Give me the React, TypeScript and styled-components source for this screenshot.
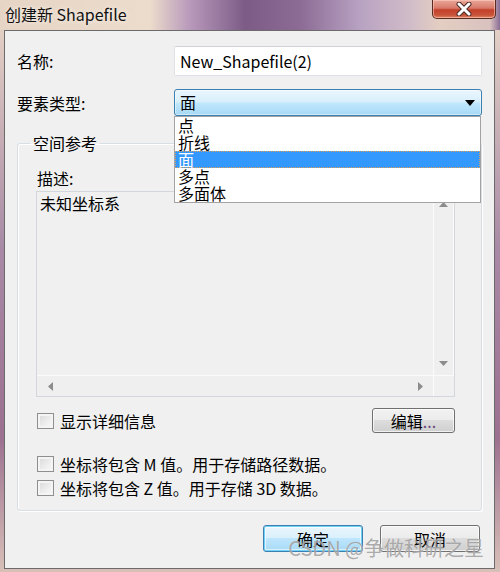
import React from "react";
import styled, { createGlobalStyle } from "styled-components";

const FONT = `"Noto Sans CJK SC", "Noto Sans", sans-serif`;

const Global = createGlobalStyle`
  html, body { margin: 0; padding: 0; width: 500px; height: 572px; overflow: hidden; }
  body { font-family: "Noto Sans CJK SC", sans-serif; background-color: #c8aeb8; }
`;

const Frame = styled.div`
  width: 500px;
  height: 572px;
  box-sizing: border-box;
  display: flex;
  flex-direction: column;
  background-color: #b89aae;
`;

const TitleBar = styled.div`
  height: 30px;
  flex-shrink: 0;
  display: flex;
  align-items: flex-start;
  padding: 0 4px;
  background-color: #b898b4;
  background-image: linear-gradient(90deg, #e6d4c4 0%, #ecdccb 30%, #b899bb 38%, #7c5c86 49%, #8c6b95 60%, #b8a2c2 72%, #d0bcc8 82%, #e4cec2 88%, #d9c2bf 98%, #8a6c94 100%);
`;

const FrameBody = styled.div`
  flex: 1;
  display: flex;
  padding: 0 5px 3px 4px;
  background-color: #c4aab8;
  background-image: linear-gradient(180deg, #e2cfc4 0%, #a98aa6 40%, #9c7090 75%, #d8c0b8 100%);
`;

const Title = styled.div`
  font: 16px/28px ${FONT};
  color: #111;
  padding-left: 1px;
  text-shadow: 0 0 5px rgba(255, 255, 255, 0.9);
`;

const CloseButton = styled.div`
  margin-left: auto;
  width: 64px;
  height: 19px;
  box-sizing: border-box;
  border: 1px solid #5b2b22;
  border-top: none;
  border-radius: 0 0 5px 5px;
  background: linear-gradient(180deg, #e9a898 0%, #d9796a 45%, #c2402a 55%, #c9553a 85%, #e08a6a 100%);
  box-shadow: inset 0 0 0 1px rgba(255, 210, 200, 0.55);
  display: flex;
  align-items: center;
  justify-content: center;
`;

const Client = styled.div`
  flex: 1;
  position: relative;
  box-sizing: border-box;
  background: #f0f0f0;
  border: 1px solid #6b6b6b;
  padding: 15px 12px 0 12px;
  display: flex;
  flex-direction: column;
  font: 16px/20px ${FONT};
  color: #000;
`;

const FormGrid = styled.div`
  display: grid;
  grid-template-columns: 157px 1fr;
  row-gap: 13px;
  align-items: center;
`;

const FieldLabel = styled.div`
  font: 16px/20px ${FONT};
`;

const TextInput = styled.div`
  height: 30px;
  box-sizing: border-box;
  background: #fff;
  border: 1px solid #dde1e6;
  border-top-color: #cfd3d8;
  border-radius: 2px;
  padding-left: 5px;
  font: 16px/28px ${FONT};
  color: #000;
`;

const SelectWrap = styled.div`
  position: relative;
  height: 27px;
`;

const SelectBox = styled.div`
  height: 27px;
  box-sizing: border-box;
  border: 1px solid #3c7fb1;
  border-radius: 3px;
  background: linear-gradient(180deg, #eaf6fd 0%, #d9f0fc 45%, #bee6fd 55%, #a7d9f5 100%);
  box-shadow: inset 0 0 0 1px rgba(255, 255, 255, 0.45);
  display: flex;
  align-items: center;
  justify-content: space-between;
  padding: 0 6px 0 5px;
  font: 16px/25px ${FONT};
`;

const DropList = styled.div`
  position: absolute;
  top: 100%;
  left: 0;
  right: 1px;
  z-index: 10;
  background: #fff;
  border: 1px solid #a3a3a3;
  display: flex;
  flex-direction: column;
`;

const DropItem = styled.div<{ $selected?: boolean }>`
  height: 17px;
  box-sizing: border-box;
  font: 16px/15px ${FONT};
  padding-left: 2px;
  border: 1px ${(p) => (p.$selected ? "dotted #d8a060" : "solid transparent")};
  background: ${(p) => (p.$selected ? "#3399ff" : "transparent")};
  color: ${(p) => (p.$selected ? "#fff" : "#000")};
`;

const Group = styled.fieldset`
  margin: 17px 0 0 0;
  padding: 0;
  border: 1px solid #d5dfe5;
  border-radius: 3px;
  box-shadow: inset 1px 1px 0 #fff, 1px 1px 0 #fff;
  min-width: 0;
`;

const Legend = styled.legend`
  margin-left: 12px;
  padding: 0 3px;
  font: 16px/20px ${FONT};
`;

const GroupBody = styled.div`
  display: flex;
  flex-direction: column;
  padding: 15px 26px 12px 18px;
`;

const DescLabel = styled.div`
  margin-left: 1px;
  font: 16px/20px ${FONT};
`;

const DescBox = styled.div`
  margin-top: 3px;
  height: 206px;
  box-sizing: border-box;
  border: 1px solid #d3d7dc;
  background: #f0f0f0;
  display: grid;
  grid-template-columns: 1fr 21px;
  grid-template-rows: 1fr 21px;
`;

const DescText = styled.div`
  padding: 1px 0 0 3px;
  font: 16px/20px ${FONT};
`;

const VScroll = styled.div`
  border-left: 1px solid #fbfbfb;
  border-right: 1px solid #fbfbfb;
  background: #efefef;
  display: flex;
  flex-direction: column;
  justify-content: space-between;
`;

const HScroll = styled.div`
  border-top: 1px solid #fbfbfb;
  background: #efefef;
  display: flex;
  justify-content: space-between;
`;

const Corner = styled.div`
  border-top: 1px solid #fbfbfb;
  border-left: 1px solid #fbfbfb;
  background: #f0f0f0;
`;

const ArrowBtn = styled.div<{ $h?: boolean }>`
  width: ${(p) => (p.$h ? "26px" : "100%")};
  height: ${(p) => (p.$h ? "100%" : "24px")};
  display: flex;
  align-items: center;
  justify-content: center;
`;

const ToolRow = styled.div`
  margin-top: 11px;
  height: 25px;
  display: flex;
  align-items: center;
  justify-content: space-between;
`;

const CheckLine = styled.label`
  display: flex;
  align-items: center;
  gap: 6px;
  margin-left: 1px;
  font: 16px/20px ${FONT};
`;

const CheckBox = styled.span`
  width: 17px;
  height: 16px;
  box-sizing: border-box;
  flex-shrink: 0;
  border: 1px solid #8e8f8f;
  background: linear-gradient(135deg, #d8d8d8 0%, #eeeeee 60%, #fbfbfb 100%);
  box-shadow: inset 0 0 0 2px #f4f4f4;
`;

const Button = styled.div<{ $default?: boolean; $w: number; $h: number }>`
  width: ${(p) => p.$w}px;
  height: ${(p) => p.$h}px;
  box-sizing: border-box;
  border: 1px solid ${(p) => (p.$default ? "#3c7fb1" : "#707070")};
  border-radius: 3px;
  background: ${(p) =>
    p.$default
      ? "linear-gradient(180deg, #eaf6fd 0%, #d9f0fc 50%, #bee6fd 50%, #a7d9f5 100%)"
      : "linear-gradient(180deg, #f2f2f2 0%, #ebebeb 50%, #dddddd 50%, #cfcfcf 100%)"};
  box-shadow: ${(p) =>
    p.$default ? "inset 0 0 0 1px #6fd0f7, inset 0 0 0 2px rgba(255,255,255,0.6)" : "inset 0 0 0 1px rgba(255,255,255,0.7)"};
  display: flex;
  align-items: center;
  justify-content: center;
  font: 16px/20px ${FONT};
  color: #000;
`;

const Dots = styled.span`
  color: #6a4a80;
`;

const OptionList = styled.div`
  margin-top: 21px;
  display: flex;
  flex-direction: column;
  gap: 4px;
`;

const ButtonRow = styled.div`
  margin-top: 14px;
  display: flex;
  justify-content: flex-end;
  gap: 17px;
  padding-right: 2px;
`;

const Watermark = styled.div`
  position: absolute;
  right: 10px;
  bottom: 9px;
  z-index: 20;
  font: 20px/22px ${FONT};
  color: rgba(150, 150, 150, 0.8);
  text-shadow: 0 0 1px rgba(255,255,255,0.6);
  pointer-events: none;
  white-space: nowrap;
`;

const Tri = ({ dir }: { dir: "up" | "down" | "left" | "right" }) => {
  const pts: Record<string, string> = {
    up: "0,5 9,5 4.5,0",
    down: "0,0 9,0 4.5,5",
    left: "5,0 5,9 0,4.5",
    right: "0,0 0,9 5,4.5",
  };
  const horiz = dir === "left" || dir === "right";
  return (
    <svg width={horiz ? 5 : 9} height={horiz ? 9 : 5} viewBox={horiz ? "0 0 5 9" : "0 0 9 5"}>
      <polygon points={pts[dir]} fill="#8c8c8c" />
    </svg>
  );
};

const items = ["点", "折线", "面", "多点", "多面体"];

export default function App() {
  return (
    <>
      <Global />
      <Frame>
        <TitleBar>
          <Title>创建新 Shapefile</Title>
          <CloseButton>
            <svg width="18" height="14" viewBox="0 0 18 14">
              <path d="M4 2 L14 12 M14 2 L4 12" stroke="#4a2a2a" strokeWidth="5" strokeLinecap="round" />
              <path d="M4 2 L14 12 M14 2 L4 12" stroke="#fff" strokeWidth="3" strokeLinecap="round" />
            </svg>
          </CloseButton>
        </TitleBar>
        <FrameBody>
          <Client>
            <FormGrid>
              <FieldLabel>名称:</FieldLabel>
              <TextInput>New_Shapefile(2)</TextInput>
              <FieldLabel>要素类型:</FieldLabel>
              <SelectWrap>
                <SelectBox>
                  <span>面</span>
                  <svg width="10" height="6" viewBox="0 0 10 6">
                    <polygon points="0,0 10,0 5,6" fill="#000" />
                  </svg>
                </SelectBox>
                <DropList>
                  {items.map((it) => (
                    <DropItem key={it} $selected={it === "面"}>
                      {it}
                    </DropItem>
                  ))}
                </DropList>
              </SelectWrap>
            </FormGrid>
            <Group>
              <Legend>空间参考</Legend>
              <GroupBody>
                <DescLabel>描述:</DescLabel>
                <DescBox>
                  <DescText>未知坐标系</DescText>
                  <VScroll>
                    <ArrowBtn>
                      <Tri dir="up" />
                    </ArrowBtn>
                    <ArrowBtn>
                      <Tri dir="down" />
                    </ArrowBtn>
                  </VScroll>
                  <HScroll>
                    <ArrowBtn $h>
                      <Tri dir="left" />
                    </ArrowBtn>
                    <ArrowBtn $h>
                      <Tri dir="right" />
                    </ArrowBtn>
                  </HScroll>
                  <Corner />
                </DescBox>
                <ToolRow>
                  <CheckLine>
                    <CheckBox />
                    显示详细信息
                  </CheckLine>
                  <Button $w={83} $h={25}>
                    编辑<Dots>...</Dots>
                  </Button>
                </ToolRow>
                <OptionList>
                  <CheckLine>
                    <CheckBox />
                    坐标将包含 M 值。用于存储路径数据。
                  </CheckLine>
                  <CheckLine>
                    <CheckBox />
                    坐标将包含 Z 值。用于存储 3D 数据。
                  </CheckLine>
                </OptionList>
              </GroupBody>
            </Group>
            <ButtonRow>
              <Button $default $w={100} $h={27}>
                确定
              </Button>
              <Button $w={100} $h={27}>
                取消
              </Button>
            </ButtonRow>
            <Watermark>CSDN @争做科研之星</Watermark>
          </Client>
        </FrameBody>
      </Frame>
    </>
  );
}
